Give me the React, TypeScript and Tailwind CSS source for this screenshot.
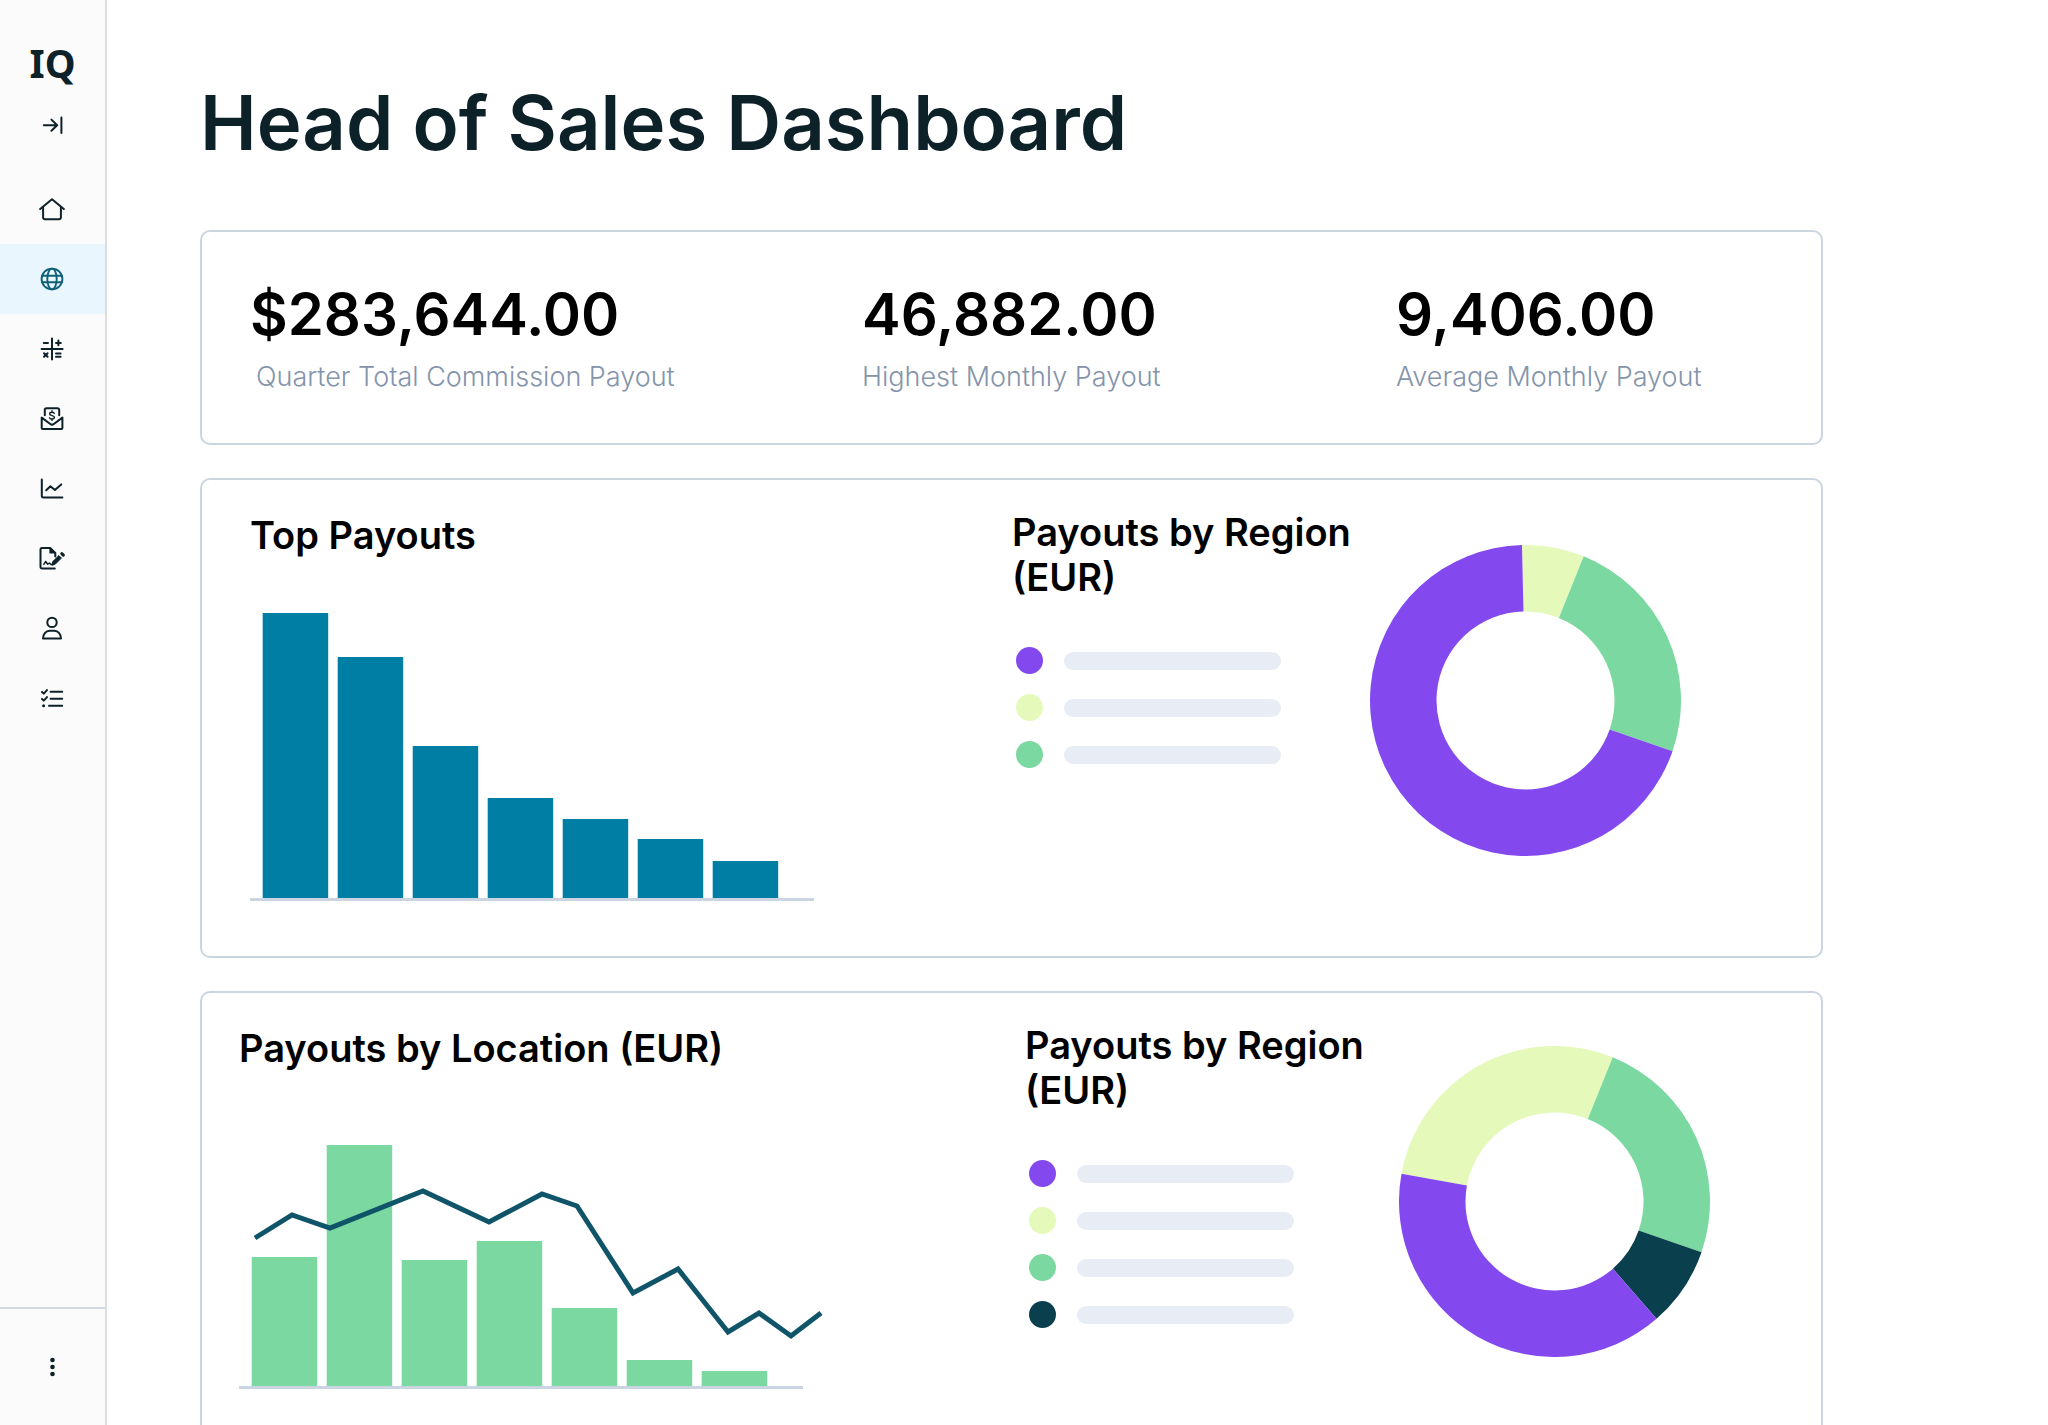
import type { ReactNode } from "react";

const PURPLE = "#8349ef";
const LIME = "#e5f9bb";
const GREEN = "#7bd8a0";
const NAVY = "#0a3f4d";
const BLUE = "#007ea3";
const AXIS = "#cbd5e1";

function Icon({ children }: { children: ReactNode }) {
  return (
    <svg
      viewBox="0 0 26 26"
      className="size-[26px]"
      fill="none"
      stroke="currentColor"
      strokeWidth={2}
      strokeLinecap="round"
      strokeLinejoin="round"
      aria-hidden="true"
    >
      {children}
    </svg>
  );
}

const navItems: { label: string; active?: boolean; icon: ReactNode }[] = [
  {
    label: "Home",
    icon: (
      <>
        <path d="M1.2 13 13 3.2 24.8 13" />
        <path d="M4.1 11v10.4a1.8 1.8 0 0 0 1.8 1.8h14.200a1.8 1.8 0 0 0 1.8-1.8V11" />
      </>
    ),
  },
  {
    label: "Global dashboards",
    active: true,
    icon: (
      <g strokeWidth={1.9}>
        <circle cx="13" cy="13" r="10.4" />
        <ellipse cx="13" cy="13" rx="4.7" ry="10.4" />
        <path d="M3 9.8h20M3 16.2h20" />
      </g>
    ),
  },
  {
    label: "Calculations",
    icon: (
      <>
        <path d="M13 2.4v21M2.6 13h21" />
        <path d="M4.8 6.9h4.2M17 6.9h4.8M19.4 4.5v4.8M5 17.2l3.6 3.6M8.600 17.2l-3.6 3.6M17 17.4h4.6M17 20.8h4.6" />
      </>
    ),
  },
  {
    label: "Payouts",
    icon: (
      <>
        <path d="M5.8 9.200V3.800a1.6 1.6 0 0 1 1.6-1.6h11.2a1.6 1.6 0 0 1 1.6 1.6v5.400" />
        <path d="M2.7 11.600v10.400a1 1 0 0 0 1 1h18.700a1 1 0 0 0 1-1V11.600l-8.600 6.400a3 3 0 0 1-3.5 0z" />
        <path
          strokeWidth={1.4}
          d="M13 4.800v1.400M13 13v1.400M15.300 7.300c-.5-.7-1.200-1-2.300-1-1.300 0-2.300.6-2.300 1.600 0 2.200 4.700 1.200 4.700 3.400 0 1-1 1.700-2.400 1.700-1.100 0-2-.4-2.500-1.200"
        />
      </>
    ),
  },
  {
    label: "Reports",
    icon: (
      <>
        <path d="M2.800 3.600v16.200a1.600 1.600 0 0 0 1.600 1.600h19" />
        <path d="m7.200 14.200 4.200-4 4.500 3.800 6.300-5.600" />
      </>
    ),
  },
  {
    label: "Agreements",
    icon: (
      <>
        <path d="M15.800 22.600H3a1.500 1.500 0 0 1-1.500-1.500V3.600a1.500 1.500 0 0 1 1.500-1.500h8.400l4.900 4.900v3.500" />
        <path d="M11 2.100v4.900h5z" fill="currentColor" strokeWidth={1.200} />
        <path d="m4.800 18.400 1.900-2.900 2 2.700 1.700-1.200 1.500 1.500h2" strokeWidth={1.500} />
        <path d="m13 18.800.8-3.200 6.100-6 2.500 2.500-6 6z" fill="currentColor" strokeWidth={1} />
        <path d="m22.800 7.600 1.500 1.500" strokeWidth={3} />
      </>
    ),
  },
  {
    label: "Profile",
    icon: (
      <>
        <circle cx="13" cy="6.400" r="4.700" />
        <path d="M4 22.400c0-4.200 2.700-7.600 6.600-7.600h4.800c3.900 0 6.600 3.400 6.600 7.600z" />
      </>
    ),
  },
  {
    label: "Tasks",
    icon: (
      <>
        <path d="M11.600 5.700h11.600M11.600 12.700h11.600M10 19.700h13.200" />
        <path d="m3 5.900 1.800 1.700L8 4.100M3 12.900l1.800 1.700L8 11.100" />
        <circle cx="4.600" cy="19.700" r="1.500" fill="currentColor" stroke="none" />
      </>
    ),
  },
];

function Sidebar() {
  return (
    <aside className="flex w-[107px] shrink-0 flex-col border-r-2 border-[#dcdee2] bg-[#fbfbfb] text-[#0d2129]">
      <a
        href="#home"
        className="mt-[35px] block text-center font-['Noto_Sans',sans-serif] text-[39px] leading-[56px] font-bold"
      >
        IQ
      </a>
      <button
        type="button"
        aria-label="Expand sidebar"
        className="mr-px mt-[21px] flex h-[26px] justify-center"
      >
        <Icon>
          <path d="M4.800 13.200h13.400M12.400 7.600l5.800 5.600-5.800 5.600M22.400 5.400v15.600" />
        </Icon>
      </button>
      <nav className="mt-9 flex flex-col" aria-label="Main">
        {navItems.map((item) => (
          <a
            key={item.label}
            href={"#" + item.label}
            aria-label={item.label}
            className={
              item.active
                ? "flex h-[70px] items-center justify-center bg-[#e9f6fd] pr-px text-[#0e6078]"
                : "flex h-[70px] items-center justify-center pr-px"
            }
          >
            <Icon>{item.icon}</Icon>
          </a>
        ))}
      </nav>
      <div className="mt-auto flex h-[118px] items-center justify-center border-t-2 border-[#d3d9e1] pr-px pb-px">
        <button type="button" aria-label="More options">
          <Icon>
            <g fill="currentColor" stroke="none">
              <circle cx="13.500" cy="6" r="2.300" />
              <circle cx="13.500" cy="13" r="2.300" />
              <circle cx="13.500" cy="20" r="2.300" />
            </g>
          </Icon>
        </button>
      </div>
    </aside>
  );
}

function Stat({ value, label, indent }: { value: string; label: string; indent?: boolean }) {
  return (
    <div className="flex flex-col-reverse justify-end gap-3">
      <dt className={indent ? "pl-1.5 text-[27px] leading-8 font-light" : "text-[27px] leading-8 font-light"}>
        {label}
      </dt>
      <dd className="text-[58px] leading-[70px] font-semibold text-black">{value}</dd>
    </div>
  );
}

function Heading({ children }: { children: ReactNode }) {
  return <h2 className="text-[38px] leading-[45px] font-semibold text-black">{children}</h2>;
}

function BarChart({
  heights,
  color,
  width,
  line,
  label,
}: {
  heights: number[];
  color: string;
  width: number;
  line?: string;
  label: string;
}) {
  const top = Math.max(...heights);
  return (
    <svg
      role="img"
      aria-label={label}
      width={width}
      height={top + 3}
      viewBox={`0 0 ${width} ${top + 3}`}
      className="block max-w-full"
    >
      {heights.map((h, i) => (
        <rect key={i} x={12.700 + i * 75} y={top - h} width={65.500} height={h} fill={color} />
      ))}
      <rect x="0" y={top} width="564" height="3" fill={AXIS} />
      {line && <polyline points={line} fill="none" stroke="#0f5469" strokeWidth={5} />}
    </svg>
  );
}

function Legend({ colors }: { colors: string[] }) {
  return (
    <ul className="mt-[47px] flex flex-col gap-5 pl-1">
      {colors.map((c) => (
        <li key={c} className="flex items-center gap-[21px]">
          <span className="size-[27px] rounded-full" style={{ backgroundColor: c }} />
          <span className="h-[18px] w-[217px] rounded-full bg-[#e8edf5]" />
        </li>
      ))}
    </ul>
  );
}

type Slice = { from: number; to: number; color: string };

function slicePath({ from, to }: Slice) {
  const c = 155.5;
  const point = (deg: number, r: number) => {
    const a = (deg * Math.PI) / 180;
    return `${(c + r * Math.sin(a)).toFixed(2)} ${(c - r * Math.cos(a)).toFixed(2)}`;
  };
  const large = to - from > 180 ? 1 : 0;
  return `M${point(from, 155.500)}A155.500 155.500 0 ${large} 1 ${point(to, 155.500)}L${point(to, 89)}A89 89 0 ${large} 0 ${point(from, 89)}Z`;
}

function Donut({ slices, label }: { slices: Slice[]; label: string }) {
  return (
    <svg role="img" aria-label={label} viewBox="0 0 311 311" width="311" height="311" className="block max-w-full">
      {slices.map((s) => (
        <path key={s.color} d={slicePath(s)} fill={s.color} />
      ))}
    </svg>
  );
}

const trend =
  "16,93 53,70 91,83 184,46 250,77 303,49 338,61 394,148 439,124 489,187 520,168 552,191 582,168";

export default function App() {
  return (
    <div className="flex h-screen bg-white font-[Inter,sans-serif]">
      <Sidebar />
      <main className="min-w-0 flex-1 overflow-y-auto pt-[76px] pr-[225px] pb-16 pl-[93px] [scrollbar-width:none]">
        <h1 className="text-[76px] leading-[92px] font-semibold text-[#0d2129]">Head of Sales Dashboard</h1>

        <div className="mt-[62px] flex flex-col gap-[33px]">
          <dl className="grid grid-cols-[612fr_534fr_425fr] rounded-[10px] border-2 border-[#cbd5e1] pt-[47px] pb-[50px] pl-12 text-[#8494ab]">
            <Stat value="$283,644.00" label="Quarter Total Commission Payout" indent />
            <Stat value="46,882.00" label="Highest Monthly Payout" />
            <Stat value="9,406.00" label="Average Monthly Payout" />
          </dl>

          <section className="grid grid-cols-[762fr_358fr_451fr] rounded-[10px] border-2 border-[#cbd5e1] pb-[55px] pl-12">
            <div className="flex flex-col gap-[55px] pt-[33px]">
              <Heading>Top Payouts</Heading>
              <BarChart
                label="Top payouts"
                color={BLUE}
                width={564}
                heights={[285, 241, 152, 100, 79, 59, 37]}
              />
            </div>
            <div className="pt-[30px]">
              <Heading>Payouts by Region (EUR)</Heading>
              <Legend colors={[PURPLE, LIME, GREEN]} />
            </div>
            <div className="pt-[65px]">
              <Donut
                label="Payouts by region"
                slices={[
                  { from: -1.300, to: 22, color: LIME },
                  { from: 22, to: 109, color: GREEN },
                  { from: 109, to: 358.700, color: PURPLE },
                ]}
              />
            </div>
          </section>

          <section className="grid grid-cols-[786fr_374fr_422fr] rounded-[10px] border-2 border-[#cbd5e1] pb-20 pl-[37px]">
            <div className="flex flex-col gap-[74px] pt-[33px]">
              <Heading>Payouts by Location (EUR)</Heading>
              <BarChart
                label="Payouts by location"
                color={GREEN}
                width={586}
                heights={[129, 241, 126, 145, 78, 26, 15]}
                line={trend}
              />
            </div>
            <div className="pt-[30px]">
              <Heading>Payouts by Region (EUR)</Heading>
              <Legend colors={[PURPLE, LIME, GREEN, NAVY]} />
            </div>
            <div className="pt-[53px]">
              <Donut
                label="Payouts by region"
                slices={[
                  { from: -79.700, to: 22, color: LIME },
                  { from: 22, to: 109, color: GREEN },
                  { from: 109, to: 139, color: NAVY },
                  { from: 139, to: 280.300, color: PURPLE },
                ]}
              />
            </div>
          </section>
        </div>
      </main>
    </div>
  );
}
